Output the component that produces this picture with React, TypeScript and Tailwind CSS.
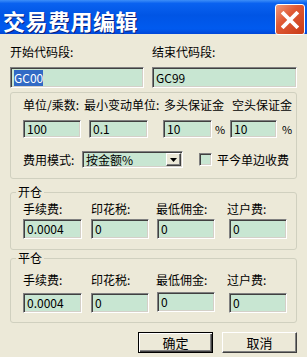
import React from 'react';

const field =
  'bg-[#C8E6D2] border border-t-[#808080] border-l-[#808080] border-b-white border-r-white shadow-[inset_1px_1px_0_#404040,inset_-1px_-1px_0_#D4D0C8] px-[3px] text-[12px] leading-[16px] text-black overflow-hidden whitespace-nowrap';

function Field({ value, className = '', selected = false }: { value: string; className?: string; selected?: boolean }) {
  return (
    <div className={`${field} flex items-center ${className}`}>
      {selected ? <span className="bg-[#316AC5] text-white">{value}</span> : <span>{value}</span>}
    </div>
  );
}

function Legend({ children }: { children: React.ReactNode }) {
  return <legend className="px-[2px] text-[12px] leading-[16px] text-black">{children}</legend>;
}

function FeeGroup({ title, rowTop, inputTop, bottom, raised }: { title: string; rowTop: string; inputTop: string; bottom: string; raised?: boolean }) {
  return (
    <fieldset className={`border border-[#D0D0BF] rounded-[3px] px-[5px] ${bottom}`}>
      <Legend>{title}</Legend>
      <div className={`ml-[7px] flex text-[12px] leading-[16px] ${rowTop}`}>
        <span className="w-[68px]">手续费:</span>
        <span className="w-[65px]">印花税:</span>
        <span className="w-[71px]">最低佣金:</span>
        <span>过户费:</span>
      </div>
      <div className={`ml-[7px] flex items-start ${inputTop}`}>
        <Field value="0.0004" className="w-[59px] h-[20px]" />
        <Field value="0" className="ml-[9px] w-[58px] h-[20px]" />
        <Field value="0" className={`ml-[8px] w-[58px] h-[20px] ${raised ? '-mt-[1px]' : ''}`} />
        <Field value="0" className="ml-[14px] w-[58px] h-[20px]" />
      </div>
    </fieldset>
  );
}

export default function App() {
  return (
    <div className="w-[307px] h-[357px] bg-[#ECE9D8] overflow-hidden font-['Noto_Sans_CJK_SC','Noto_Sans',sans-serif] text-black">
      {/* Title bar */}
      <div className="h-[34px] bg-[linear-gradient(180deg,#3D8EF8_0%,#0A62F0_10%,#0055E5_45%,#005AEF_85%,#0046D8_100%)] flex items-center justify-between pl-[3px] pr-[2px]">
        <span className="text-[22px] leading-[26px] font-bold text-white tracking-[0.5px] pt-[5px] [text-shadow:1px_1px_0_#0A1E7A]">
          交易费用编辑
        </span>
        <div className="w-[30px] h-[31px] mt-[5px] rounded-[3px] border border-white bg-[linear-gradient(135deg,#F09A7C_0%,#E05A35_40%,#C83B17_100%)] flex items-center justify-center">
          <svg width="18" height="18" viewBox="0 0 18 18">
            <path d="M2.5 2.5 L15.5 15.5 M15.5 2.5 L2.5 15.5" stroke="white" strokeWidth="3.8" strokeLinecap="square" />
          </svg>
        </div>
      </div>

      <div className="flex flex-col px-[10px]">
        {/* code range */}
        <div className="mt-[10px] flex gap-[8px] text-[12px] leading-[16px]">
          <span className="w-[134px]">开始代码段:</span>
          <span>结束代码段:</span>
        </div>
        <div className="mt-[7px] flex gap-[8px]">
          <Field value="GC00" selected className="w-[134px] h-[21px]" />
          <Field value="GC99" className="w-[145px] h-[21px]" />
        </div>

        {/* parameters */}
        <div className="mt-[4px] h-[87px] border border-[#D0D0BF] rounded-[3px] pl-[12px] pt-[4px]">
          <div className="flex text-[12px] leading-[16px] whitespace-nowrap">
            <span className="w-[61px]">单位/乘数:</span>
            <span className="w-[80px]">最小变动单位:</span>
            <span className="w-[68px]">多头保证金</span>
            <span>空头保证金</span>
          </div>
          <div className="mt-[7px] flex items-center text-[11px] leading-[16px]">
            <Field value="100" className="w-[58px] h-[18px]" />
            <Field value="0.1" className="ml-[8px] w-[59px] h-[18px]" />
            <Field value="10" className="ml-[15px] w-[49px] h-[18px]" />
            <span className="ml-[3px] w-[15px]">%</span>
            <Field value="10" className="w-[47px] h-[18px]" />
            <span className="ml-[5px]">%</span>
          </div>
          <div className="mt-[13px] flex items-center text-[12px] leading-[16px]">
            <span className="w-[59px]">费用模式:</span>
            <div className={`${field} w-[101px] h-[17px] flex items-center justify-between pr-[1px]`}>
              <span>按金额%</span>
              <div className="w-[15px] h-[13px] bg-[#ECE9D8] border border-t-white border-l-white border-b-[#404040] border-r-[#404040] shadow-[inset_-1px_-1px_0_#808080] flex items-center justify-center">
                <svg width="7" height="4" viewBox="0 0 7 4">
                  <path d="M0 0 H7 L3.5 4 Z" fill="black" />
                </svg>
              </div>
            </div>
            <div className="ml-[16px] w-[13px] h-[13px] bg-[#C8E6D2] border border-t-[#808080] border-l-[#808080] border-b-white border-r-white shadow-[inset_1px_1px_0_#404040,inset_-1px_-1px_0_#D4D0C8]" />
            <span className="ml-[5px]">平今单边收费</span>
          </div>
        </div>

        <div className="mt-[5px]">
          <FeeGroup title="开仓" rowTop="pt-[1px]" inputTop="mt-[2px]" bottom="pb-[10px]" />
        </div>
        <div>
          <FeeGroup title="平仓" rowTop="pt-[6px]" inputTop="mt-[5px]" bottom="pb-[9px]" raised />
        </div>

        {/* buttons */}
        <div className="mt-[9px] flex justify-end gap-[9px] text-[13px]">
          <button className="w-[75px] h-[21px] bg-[#ECE9D8] border border-black shadow-[inset_1px_1px_0_#fff,inset_-1px_-1px_0_#404040,inset_-2px_-2px_0_#808080] leading-[19px]">
            确定
          </button>
          <button className="w-[75px] h-[21px] bg-[#ECE9D8] border border-t-white border-l-white border-b-[#404040] border-r-[#404040] shadow-[inset_-1px_-1px_0_#808080] leading-[19px]">
            取消
          </button>
        </div>
      </div>
    </div>
  );
}
